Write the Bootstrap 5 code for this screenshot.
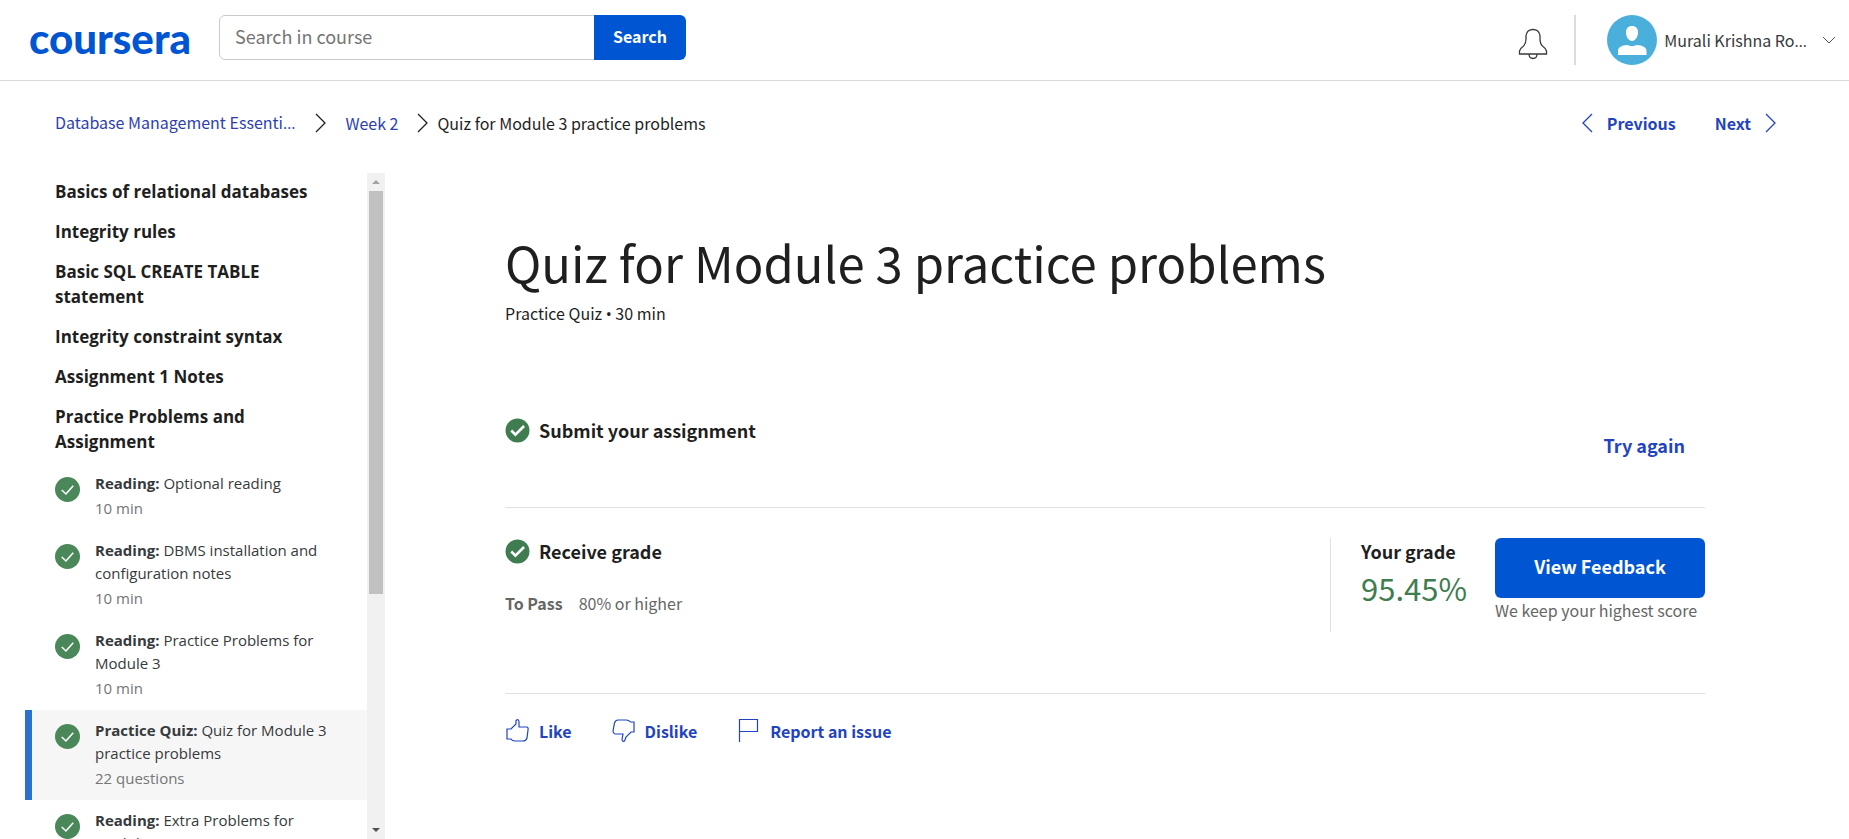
<!DOCTYPE html>
<html lang="en">
<head>
<meta charset="utf-8">
<meta name="viewport" content="width=device-width, initial-scale=1">
<title>Quiz for Module 3 practice problems | Coursera</title>
<link href="https://cdn.jsdelivr.net/npm/bootstrap@5.3.0/dist/css/bootstrap.min.css" rel="stylesheet">
<style>
:root { --blue: #0056d2; --link: #1f44bd; --crumb: #2d3fb0; --ink: #1f1f1f; --grey: #666; --green: #3f7d50; --rule: #e1e1e1; }
body { font-family: "Noto Sans CJK SC", sans-serif; font-size: 16px; line-height: 24px; color: var(--ink); }
a { color: inherit; text-decoration: none; }
svg { flex: none; display: block; }
.sym { font-family: "Open Sans", sans-serif; }
.topbar { height: 81px; border-bottom: 1px solid #d9d9d9; padding: 0 12px 0 29px; }
.brand { font-family: Lato, sans-serif; font-weight: 900; font-size: 42px; line-height: 40px; color: var(--blue); width: 190px; padding-bottom: 5px; }
.search { width: 467px; height: 45px; margin-bottom: 6px; }
.search .form-control { font-size: 18px; border-color: #c7cbcc; padding: 0 15px 2px; }
.search .form-control::placeholder { color: #757575; }
.search .btn { width: 92px; background: var(--blue); color: #fff; font-weight: 700; font-size: 16px; padding: 0 0 2px; }
.split { width: 2px; height: 50px; background: #dcdcdc; margin: 0 31px 0 26px; }
.account { color: #373a3c; gap: 7px; line-height: 24px; }
.account .caret { margin-left: 7px; }
.crumbs { padding: 0 72px 0 55px; height: 83px; }
.crumbs .steps a { color: var(--crumb); }
.crumbs .steps svg { margin: 0 8px 0 19px; }
.crumbs .steps svg.wide { margin: 0 18px 0 20px; }
.pager { color: var(--link); font-weight: 700; gap: 39px; }
.pager a { gap: 14px; }
.lower { padding-top: 9px; }
.outline { width: 360px; margin-left: 25px; font-family: "Open Sans", sans-serif; }
.list-pane { width: 342px; }
.topic { display: block; font-weight: 700; font-size: 17px; line-height: 25px; padding: 6px 20px 9px 30px; }
.lesson { display: flex; gap: 15px; font-size: 15px; line-height: 23px; color: #373a3c; padding: 9px 32px 10px 23px; border-left: 7px solid transparent; }
.lesson svg { margin-top: 5px; }
.lesson .meta { display: block; color: #757575; margin-top: 2px; }
.lesson.current { background: #f6f6f6; border-left-color: #2a73cc; }
.scrollbar { width: 18px; background: #f1f1f1; }
.scrollbar .thumb { width: 14px; height: 64%; background: #c1c1c1; }
.scrollbar .cap { height: 18px; }
.content { padding: 53px 144px 0 120px; }
.content h1 { font-size: 49px; line-height: 72px; margin: 0 0 3px; font-weight: 400; }
.step-title { font-size: 18px; line-height: 26px; font-weight: 700; margin: 0; gap: 9px; }
.step { border-bottom: 1px solid var(--rule); }
.step-submit { margin-top: 91px; padding-bottom: 49px; }
.step-grade { padding: 30px 0 61px; }
.try { color: var(--link); font-weight: 700; font-size: 18px; border: 0; padding: 0; line-height: 26px; margin: 15px 20px 0 0; }
.goal { color: var(--grey); margin: 27px 0 0; }
.note { color: var(--grey); line-height: 24px; }
.score { border-left: 1px solid var(--rule); padding-left: 30px; height: 94px; gap: 28px; }
.score .value { font-size: 31px; line-height: 48px; color: var(--green); }
.feedback { width: 210px; height: 60px; background: var(--blue); color: #fff; font-weight: 700; font-size: 18px; padding: 6px 0 9px; }
.actions { gap: 39px; padding-top: 24px; }
.actions .btn { color: var(--link); font-weight: 700; font-size: 16px; line-height: 24px; padding: 0; border: 0; gap: 9px; }
</style>
</head>
<body class="d-flex flex-column vh-100 overflow-hidden bg-white">
<svg class="d-none">
  <symbol id="done" viewBox="0 0 24 24"><circle cx="12" cy="12" r="12" fill="#4a8759"/><path d="M6.5 12.5l4 3.8 7-8" fill="none" stroke="#fff" stroke-width="1.5"/></symbol>
  <symbol id="step" viewBox="0 0 24 24"><circle cx="12" cy="12" r="11.5" fill="#3f7d50"/><path d="M6 12l4 4 8.300-8.300" fill="none" stroke="#fff" stroke-width="2.500"/></symbol>
  <symbol id="right" viewBox="0 0 12 20"><path d="M1 1l9 9-9 9" fill="none" stroke="currentColor" stroke-width="1.3"/></symbol>
  <symbol id="left" viewBox="0 0 12 20"><path d="M11 1l-9 9 9 9" fill="none" stroke="currentColor" stroke-width="1.3"/></symbol>
</svg>

<header class="topbar d-flex align-items-center flex-shrink-0">
  <a href="#" class="brand">coursera</a>
  <form class="search input-group flex-nowrap">
    <input class="form-control" type="text" placeholder="Search in course" aria-label="Search in course">
    <button class="btn" type="button">Search</button>
  </form>
  <div class="d-flex align-items-center ms-auto">
    <a href="#" aria-label="Notifications" class="pt-2"><svg width="30" height="32" viewBox="0 0 30 32" fill="none" stroke="#373a3c" stroke-width="1.3"><path d="M1.500 26V23Q2 20.500 5 18.500Q8 16 8 11V7.500Q9 1.500 15 1.500Q21 1.500 22 7.500V11Q22 16 25 18.500Q28 20.500 28.500 23V26ZM11 26Q11 30.500 15 30.500Q19 30.500 19 26"/></svg></a>
    <div class="split"></div>
    <button type="button" class="account btn border-0 p-0 d-flex align-items-center">
      <svg width="50" height="50" viewBox="0 0 50 50"><circle cx="25" cy="25" r="25" fill="#4bafdc"/><path d="M25 11c4 0 6 2.500 6 6.500S28.500 26 25 26s-6-4.500-6-8.500S21 11 25 11zM11 40v-4c0-4 4-5.500 9-6 3.500 1.500 6.500 1.500 10 0 5 .5 9.500 2 9.500 6v4z" fill="#fff"/></svg>
      <span>Murali Krishna Ro<span class="sym">…</span></span>
      <svg class="caret" width="16" height="10" viewBox="0 0 16 10"><path d="M2 2l6 6 6-6" fill="none" stroke="#555" stroke-width="1"/></svg>
    </button>
  </div>
</header>

<nav class="crumbs d-flex align-items-center justify-content-between flex-shrink-0" aria-label="Breadcrumb">
  <div class="steps d-flex align-items-center">
    <a href="#">Database Management Essenti<span class="sym">…</span></a>
    <svg class="wide" width="12" height="20"><use href="#right"/></svg>
    <a href="#">Week 2</a>
    <svg width="12" height="20"><use href="#right"/></svg>
    <span>Quiz for Module 3 practice problems</span>
  </div>
  <div class="pager d-flex">
    <a href="#" class="d-flex align-items-center"><svg width="12" height="20"><use href="#left"/></svg>Previous</a>
    <a href="#" class="d-flex align-items-center">Next<svg width="12" height="20"><use href="#right"/></svg></a>
  </div>
</nav>

<div class="lower d-flex flex-grow-1 overflow-hidden">
  <aside class="outline d-flex flex-shrink-0">
    <div class="list-pane">
      <a href="#" class="topic">Basics of relational databases</a>
      <a href="#" class="topic">Integrity rules</a>
      <a href="#" class="topic">Basic SQL CREATE TABLE statement</a>
      <a href="#" class="topic">Integrity constraint syntax</a>
      <a href="#" class="topic">Assignment 1 Notes</a>
      <a href="#" class="topic">Practice Problems and Assignment</a>
      <a href="#" class="lesson"><svg width="25" height="25"><use href="#done"/></svg><span><b>Reading:</b> Optional reading<span class="meta">10 min</span></span></a>
      <a href="#" class="lesson"><svg width="25" height="25"><use href="#done"/></svg><span><b>Reading:</b> DBMS installation and configuration notes<span class="meta">10 min</span></span></a>
      <a href="#" class="lesson"><svg width="25" height="25"><use href="#done"/></svg><span><b>Reading:</b> Practice Problems for Module 3<span class="meta">10 min</span></span></a>
      <a href="#" class="lesson current"><svg width="25" height="25"><use href="#done"/></svg><span><b>Practice Quiz:</b> Quiz for Module 3 practice problems<span class="meta">22 questions</span></span></a>
      <a href="#" class="lesson"><svg width="25" height="25"><use href="#done"/></svg><span><b>Reading:</b> Extra Problems for Module 3</span></a>
    </div>
    <div class="scrollbar d-flex flex-column align-items-center">
      <div class="cap d-flex align-items-center"><svg width="8" height="4"><path d="M0 4l4-4 4 4z" fill="#a3a3a3"/></svg></div>
      <div class="flex-grow-1"><div class="thumb"></div></div>
      <div class="cap d-flex align-items-center"><svg width="8" height="4"><path d="M0 0l4 4 4-4z" fill="#505050"/></svg></div>
    </div>
  </aside>

  <main class="content flex-grow-1">
    <h1>Quiz for Module 3 practice problems</h1>
    <p class="mb-0">Practice Quiz <span class="sym">•</span> 30 min</p>

    <section class="step step-submit d-flex justify-content-between align-items-start">
      <h2 class="step-title d-flex align-items-center"><svg width="25" height="25"><use href="#step"/></svg>Submit your assignment</h2>
      <button type="button" class="try btn">Try again</button>
    </section>

    <section class="step step-grade d-flex justify-content-between">
      <div>
        <h2 class="step-title d-flex align-items-center"><svg width="25" height="25"><use href="#step"/></svg>Receive grade</h2>
        <p class="goal"><b>To Pass</b><span class="ms-3">80% or higher</span></p>
      </div>
      <div class="score d-flex">
        <div><h2 class="step-title">Your grade</h2><div class="value">95.45%</div></div>
        <div><button type="button" class="feedback btn">View Feedback</button><div class="note">We keep your highest score</div></div>
      </div>
    </section>

    <div class="actions d-flex">
      <button type="button" class="btn d-flex align-items-center"><svg width="25" height="25" viewBox="0 0 25 25" fill="none" stroke="currentColor" stroke-width="1.2"><path d="M2 11h4l5-5V2.500q2.500-2 3 1V9h8q1.500.5 1 3l-1 8q-1 3-4 3H10q-3 0-4-2H2z"/></svg>Like</button>
      <button type="button" class="btn d-flex align-items-center"><svg width="25" height="25" viewBox="0 0 25 25" fill="none" stroke="currentColor" stroke-width="1.2"><path d="M23 14h-3l-5 5-1.500 4q-2 1-2.500-1.500l1-5.500H4q-2-.5-2-3L3.500 5Q4.500 2 7 2h8q3 0 4.500 2H23z"/></svg>Dislike</button>
      <button type="button" class="btn d-flex align-items-center"><svg width="25" height="25" viewBox="0 0 25 25" fill="none" stroke="currentColor" stroke-width="1.2"><path d="M3.500 24V1.500h18v12h-18"/></svg>Report an issue</button>
    </div>
  </main>
</div>
<script src="https://cdn.jsdelivr.net/npm/bootstrap@5.3.0/dist/js/bootstrap.bundle.min.js"></script>
</body>
</html>
